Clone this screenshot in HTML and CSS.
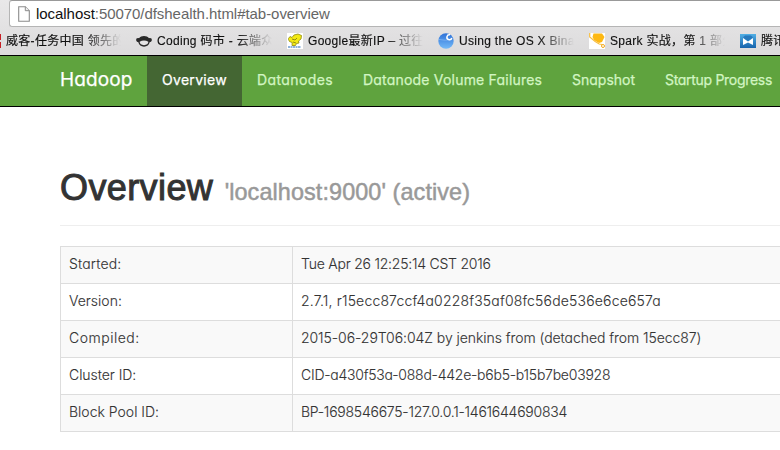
FILE: index.html
```html
<!DOCTYPE html>
<html lang="en">
<head>
<meta charset="utf-8">
<title>Namenode information</title>
<link rel="stylesheet" href="styles.css">
</head>
<body>
<div class="chrome">
  <div class="address">
    <svg class="page-icon" width="12" height="16" viewBox="0 0 12 16"><path d="M.7.7h6.6l4 4v10.6H.7z" fill="#fff" stroke="#8c8c8c" stroke-width="1.1"/><path d="M7.3.7v4h4" fill="#eee" stroke="#8c8c8c"/></svg>
    <span class="url"><b>localhost</b>:50070/dfshealth.html#tab-overview</span>
  </div>
  <div class="bookmarks">
    <div class="mark first"><svg class="ico" width="16" height="16" viewBox="0 0 16 16"><path d="M0 1h16v6H0zM0 9h16v6H0z" fill="#c71f25"/><path d="M13 5h2v3h-2z" fill="#fff"/></svg><span class="label">威客-任务中国 领先的专</span></div>
    <div class="mark"><svg class="ico" width="16" height="16" viewBox="0 0 16 16"><path d="M3 5.200C4 3.700 6 3 8 3s4 .7 5 2.200c2-.5 3 .5 2.800 2-.1 1.200-1 1.800-2 1.900C13 12 11 13.700 8 13.700S3 12 2.200 9.100c-1-.1-1.900-.7-2-1.900C0 5.700 1 4.700 3 5.200z" fill="#292929"/><path d="M3.600 8.800Q8 6.200 12.400 8.800 12 12 8 12.200 4 12 3.600 8.800z" fill="#e5e4e5"/></svg><span class="label">Coding 码市 - 云端众包</span></div>
    <div class="mark"><svg class="ico" width="16" height="16" viewBox="0 0 16 16"><path fill="#fff" d="M0 0h16v16H0z"/><path d="M1.500 5.500l1.500-2 2 1 2-2.500 4-1 3.500 1.500-.5 3.500-2.500 2 .5 2-2.500.5-1 2H5l.2-3-2.700-1-1-2z" fill="#f3ea14" stroke="#8f890e" stroke-width=".8"/><path d="M5 6l3 1 2-2m-4 4l3 1" stroke="#7c7610" stroke-width=".8" fill="none"/><path d="M1 14h13" stroke="#6b9bd0" stroke-width="1.300" stroke-dasharray="2 .5"/></svg><span class="label">Google最新IP – 过往记</span></div>
    <div class="mark"><svg class="ico" width="16" height="16" viewBox="0 0 16 16"><defs><linearGradient id="ball" x2="0" y2="1"><stop stop-color="#2e72d8"/><stop offset="1" stop-color="#74baf8"/></linearGradient></defs><circle cx="8" cy="8" r="7.700" fill="url(#ball)"/><path d="M1 6.500Q7 8 14 6.500" stroke="#75aef0" fill="none"/><path d="M12 1.800A2.500 2.500 0 1 0 13.800 5" stroke="#fff" stroke-width="1.500" fill="none"/></svg><span class="label">Using the OS X Binaries</span></div>
    <div class="mark"><svg class="ico" width="16" height="16" viewBox="0 0 16 16"><path fill="#fff" d="M0 0h16v16H0z"/><path d="M4.500.5h8.500l2.500 3.500-2.500 5-3 1-5-3-1.500-3z" fill="#fdb813"/><path d="M.7 0v4l5.500 4.500 4 2.500 3 .5" stroke="#f8bd3e" stroke-width="1.200" fill="none"/><circle cx="14" cy="13" r="1.500" fill="#fff" stroke="#f4a91c"/></svg><span class="label">Spark 实战，第 1 部分: 使</span></div>
    <div class="mark"><svg class="ico" width="16" height="16" viewBox="0 0 16 16"><defs><linearGradient id="blue" x2="0" y2="1"><stop stop-color="#51afe5"/><stop offset="1" stop-color="#1764ac"/></linearGradient></defs><path d="M0 1h16v14H0z" fill="url(#blue)"/><path d="M3 5l5 3.500L13 5v7L8 9.500 3 12z" fill="#fff"/><path d="M3 4.500l5 3.500 5-3.500L11 2.500H5z" fill="#2779bd"/></svg><span class="label">腾讯视频</span></div>
  </div>
</div>
<nav class="navbar">
  <a class="brand">Hadoop</a>
  <a class="tab overview active">Overview</a>
  <a class="tab datanodes">Datanodes</a>
  <a class="tab volumes">Datanode Volume Failures</a>
  <a class="tab snapshot">Snapshot</a>
  <a class="tab startup">Startup Progress</a>
</nav>
<main>
  <header class="page-header"><h1>Overview <small>'localhost:9000' (active)</small></h1></header>
  <table>
    <tr class="started"><td>Started:</td><td>Tue Apr 26 12:25:14 CST 2016</td></tr>
    <tr class="version"><td>Version:</td><td>2.7.1, r15ecc87ccf4a0228f35af08fc56de536e6ce657a</td></tr>
    <tr class="compiled"><td>Compiled:</td><td>2015-06-29T06:04Z by jenkins from (detached from 15ecc87)</td></tr>
    <tr class="cluster"><td>Cluster ID:</td><td>CID-a430f53a-088d-442e-b6b5-b15b7be03928</td></tr>
    <tr class="pool"><td>Block Pool ID:</td><td>BP-1698546675-127.0.0.1-1461644690834</td></tr>
  </table>
</main>
</body>
</html>
```
FILE: styles.css
```css
* { box-sizing: border-box; }
body {
  margin: 0;
  width: 780px;
  height: 450px;
  overflow: hidden;
  background: #fff;
  color: #333;
  font: 14px/20px Inter, "Liberation Sans", sans-serif;
  font-feature-settings: "cv11", "calt" 0;
}
.chrome {
  height: 56px;
  background: linear-gradient(#e9e8e9, #dcdbdc);
  border-bottom: 1px solid #000;
  font-family: "Liberation Sans", "Noto Sans CJK SC", sans-serif;
}
.address {
  display: flex;
  align-items: center;
  height: 27px;
  margin-left: 9px;
  padding-left: 8px;
  background: #fff;
  border: 1px solid #b5b5b5;
  border-top-color: #999;
  border-right: 0;
  border-radius: 3px 0 0 3px;
}
.page-icon { flex: none; }
.url { margin-left: 6px; font-size: 15px; letter-spacing: -.05px; color: #666; white-space: nowrap; }
.url b { font-weight: 400; color: #111; }
.bookmarks { display: flex; height: 28px; align-items: center; overflow: hidden; }
.mark { display: flex; align-items: center; flex: none; width: 151px; }
.mark.first { width: 136px; }
.mark.first .ico { margin-left: -15px; }
.ico { flex: none; }
.label {
  width: 115px;
  margin-left: 5px;
  overflow: hidden;
  white-space: nowrap;
  font-size: 12px;
  letter-spacing: .3px;
  color: #111;
  -webkit-text-stroke: .15px #111;
  -webkit-mask-image: linear-gradient(90deg, #000 80px, transparent 115px);
  mask-image: linear-gradient(90deg, #000 80px, transparent 115px);
}
.navbar {
  display: flex;
  height: 51px;
  padding-left: 45px;
  background: #5fa33e;
  border-bottom: 1px solid #000;
  white-space: nowrap;
  overflow: hidden;
}
.navbar a { flex: none; padding: 14px 0 14px 15px; color: #d2f5c2; -webkit-text-stroke: .25px currentColor; }
.navbar .brand { width: 102px; font-size: 19px; letter-spacing: .1px; color: #fff; }
.navbar .active { background: #446633; color: #fff; }
.overview { width: 95px; letter-spacing: .3px; }
.datanodes { width: 106px; letter-spacing: .4px; }
.volumes { width: 209px; letter-spacing: .2px; }
.snapshot { width: 93px; }
.startup { letter-spacing: -.3px; }
main { margin-left: 60px; }
.page-header { height: 79px; margin: 40px 0 20px; padding-top: 21px; border-bottom: 1px solid #eee; }
h1 {
  margin: 0;
  font: 36px/40px "Liberation Sans", sans-serif;
  letter-spacing: .4px;
  -webkit-text-stroke: 1px #333;
}
small { margin-left: 1px; font-size: 23.4px; letter-spacing: .1px; color: #999; -webkit-text-stroke: .5px #999; }
table { width: 100%; border-collapse: collapse; table-layout: fixed; font-weight: 350; -webkit-text-stroke: .1px #333; }
td { height: 37px; padding: 7px 8px 9px; border: 1px solid #ddd; border-right: 0; white-space: nowrap; }
td:first-child { width: 232px; }
tr:nth-child(odd) { background: #f9f9f9; }
.started td:first-child { letter-spacing: .15px; }
.started td + td { letter-spacing: -.23px; }
.version td + td { letter-spacing: .17px; }
.compiled td:first-child { letter-spacing: .5px; }
.compiled td + td { letter-spacing: -.06px; }
.cluster td:first-child { letter-spacing: -.05px; }
.cluster td + td { letter-spacing: -.24px; }
.pool td + td { letter-spacing: -.24px; }
```
